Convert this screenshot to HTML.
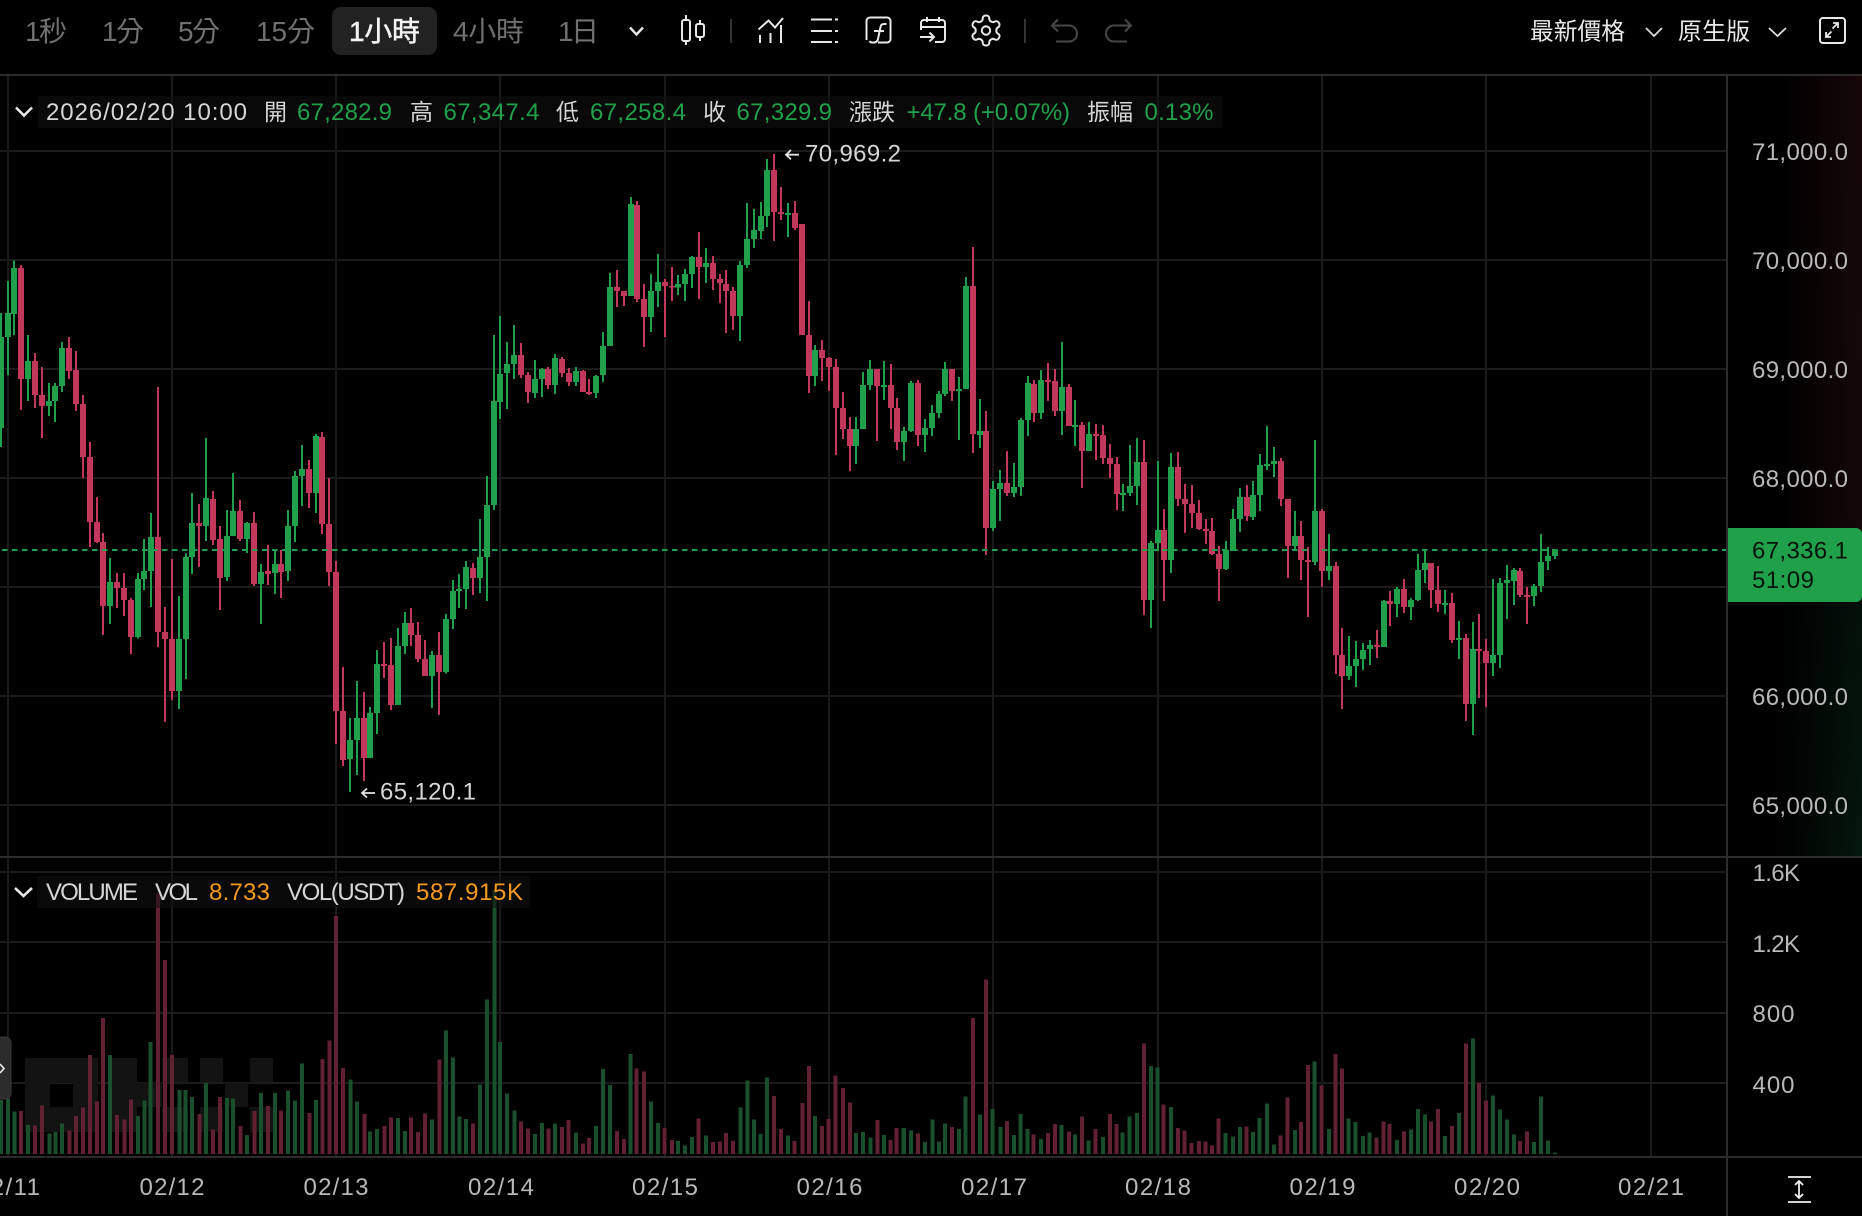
<!DOCTYPE html>
<html lang="zh-Hant">
<head>
<meta charset="utf-8">
<title>Chart</title>
<style>
html,body{margin:0;padding:0;background:#000;width:1862px;height:1216px;overflow:hidden}
svg{display:block}
text{font-family:"Liberation Sans","Noto Sans CJK TC",sans-serif;font-size:24px;fill:#d6d6d6}
.tab{font-size:28px;fill:#707070}
.cj{font-size:23px}
.top{font-size:23.8px;fill:#e8e8e8}
.g{fill:#21a04b}
.o{fill:#f59a1f}
.ax{fill:#b9b9b9}
.gw,.gb,.rw,.rb{fill:none;shape-rendering:crispEdges}
.gw{stroke:#21a04b;stroke-width:6}
.gb{stroke:#21a04b;stroke-width:18}
.rw{stroke:#c2375c;stroke-width:6}
.rb{stroke:#c2375c;stroke-width:18}
.vg,.vr{fill:none;shape-rendering:crispEdges}
.vg{stroke:#1a4f2e}
.vr{stroke:#622033}
.ic{fill:none;stroke:#e8e8e8;stroke-width:2}
.dim{fill:none;stroke:#484848;stroke-width:2}
</style>
</head>
<body>
<svg width="1862" height="1216" viewBox="0 0 1862 1216" xmlns="http://www.w3.org/2000/svg">
<defs>
<linearGradient id="gv" x1="0" y1="0" x2="0" y2="1">
<stop offset="0" stop-color="#160709"/><stop offset=".57" stop-color="#150708"/><stop offset=".68" stop-color="#03100a"/><stop offset="1" stop-color="#04170d"/>
</linearGradient>
<linearGradient id="gh" x1="0" y1="0" x2="1" y2="0">
<stop offset="0" stop-color="#000"/><stop offset=".4" stop-color="#000"/><stop offset="1" stop-color="#000" stop-opacity="0"/>
</linearGradient>
</defs>
<rect width="1862" height="1216" fill="#000"/>

<!-- axis gradient -->
<rect x="1728" y="76" width="134" height="781" fill="url(#gv)"/>
<rect x="1728" y="76" width="134" height="781" fill="url(#gh)"/>

<!-- grid -->
<path fill="none" stroke="#1b1b1b" stroke-width="2" shape-rendering="crispEdges" d="M8 76V1156M172 76V1156M336 76V1156M500 76V1156M665 76V1156M829 76V1156M993 76V1156M1158 76V1156M1322 76V1156M1486 76V1156M1651 76V1156M0 151H1726M0 260H1726M0 369H1726M0 478H1726M0 587H1726M0 696H1726M0 805H1726M0 872H1726M0 942H1726M0 1013H1726M0 1083H1726"/>

<!-- watermark -->
<path fill="#131313" shape-rendering="crispEdges" d="M25 1058H98V1132H25ZM50 1083V1107H73V1083ZM112 1058H137V1132H112ZM137 1083H162V1107H137ZM162 1058H188V1082H162ZM162 1107H188V1132H162ZM200 1058H223V1082H200ZM200 1107H223V1132H200ZM225 1083H248V1107H225ZM250 1058H273V1082H250ZM250 1107H273V1132H250Z"/>

<!-- volume -->
<g transform="translate(0 840) scale(.35714 .33333)" stroke-width="11.2">
<path class="vg" d="M3 780V942M22 775V942M40 815V942M78 855V942M138 880V942M155 876V942M174 850V942M308 645V942M387 828V942M404 781V942M422 606V942M502 750V942M520 750V942M538 771V942M577 729V942M636 774V942M653 775V942M692 885V942M731 759V942M770 759V942M807 751V942M826 781V942M846 670V942M885 780V942M981 718V942M1000 785V942M1036 875V942M1056 867V942M1114 834V942M1134 873V942M1210 838V942M1249 571V942M1269 652V942M1287 829V942M1305 837V942M1344 733V942M1364 478V942M1384 150V942M1400 606V942M1420 761V942M1440 812V942M1498 882V942M1518 849V942"/>
<path class="vr" d="M59 813V942M98 857V942M118 796V942M194 871V942M213 828V942M233 802V942M252 645V942M272 784V942M289 534V942M328 825V942M348 838V942M367 778V942M443 160V942M462 360V942M482 645V942M558 822V942M597 868V942M616 771V942M673 858V942M712 813V942M751 798V942M787 811V942M866 819V942M903 657V942M922 602V942M941 228V942M961 684V942M1020 822V942M1076 858V942M1095 832V942M1151 832V942M1171 876V942M1190 820V942M1230 659V942M1325 851V942M1459 845V942M1479 866V942M1536 865V942"/>
</g>
<g transform="translate(550 960) scale(.54845 .33333)" stroke-width="7.3">
<path class="vg" d="M9 490V582M47 517V582M84 498V582M97 327V582M109 375V582M147 282V582M184 424V582M197 489V582M233 543V582M246 556V582M259 531V582M284 527V582M347 443V582M360 361V582M372 478V582M384 522V582M396 353V582M434 526V582M483 468V582M558 519V582M571 516V582M584 533V582M609 525V582M645 504V582M658 511V582M684 546V582M697 478V582M709 545V582M720 490V582M746 507V582M758 410V582M784 463V582M807 447V582M821 501V582M846 525V582M858 462V582M871 507V582M895 537V582M933 495V582M957 524V582M982 541V582M1008 531V582M1044 518V582M1057 470V582M1070 459V582M1096 318V582M1108 322V582M1132 441V582M1232 519V582M1245 529V582M1258 501V582M1282 516V582M1294 474V582M1307 431V582M1320 553V582M1358 510V582M1394 305V582M1420 507V582M1456 476V582M1469 486V582M1482 528V582M1494 518V582M1544 540V582"/>
<path class="vr" d="M22 501V582M34 480V582M60 550V582M71 534V582M122 513V582M135 537V582M158 325V582M171 334V582M209 504V582M222 540V582M271 476V582M297 546V582M310 545V582M321 519V582M334 543V582M408 408V582M421 507V582M446 543V582M460 429V582M472 318V582M496 498V582M508 477V582M521 346V582M534 384V582M547 427V582M597 480V582M621 540V582M632 504V582M671 521V582M733 501V582M771 174V582M795 58V582M833 483V582M882 524V582M908 519V582M921 492V582M946 514V582M970 470V582M995 507V582M1021 462V582M1033 492V582M1083 250V582M1119 433V582M1145 504V582M1157 511V582M1170 549V582M1183 543V582M1195 545V582M1207 556V582M1219 476V582M1270 500V582M1332 527V582M1345 412V582M1369 486V582M1382 315V582M1407 377V582M1432 282V582M1444 325V582M1507 533V582M1520 485V582M1531 492V582M1557 515V582"/>
</g>
<g transform="translate(1400 840) scale(.33333)" stroke-width="12">
<path class="vg" d="M33 868V942M54 807V942M75 823V942M135 888V942M177 819V942M219 595V942M279 766V942M300 808V942M321 839V942M342 884V942M402 906V942M423 770V942M444 902V942M465 937V942"/>
<path class="vr" d="M93 844V942M114 807V942M156 858V942M198 610V942M237 729V942M258 782V942M360 903V942M381 874V942"/>
</g>

<!-- candles A -->
<g transform="translate(0 250) scale(.33333 .35075)">
<path class="gw" d="M3 180V562M24 88V356M42 30V242M84 242V430M147 379V473M165 379V490M186 263V405M330 878V1066M414 921V1108M432 824V969M453 750V1018M537 986V1309M558 865V1223M576 693V924M618 536V830M681 741V944M699 636V815M741 775V864M783 895V1066M825 852V981M864 741V944M885 630V832M906 556V730M948 525V750M1050 1334V1545M1071 1229V1497M1110 1303V1448M1131 1140V1380M1194 1078V1297"/>
<path class="gb" d="M3 248V507M24 180V248M42 51V182M84 316V368M147 430V445M165 388V430M186 279V388M330 947V1015M414 938V1103M432 915V938M453 818V915M537 1109V1257M558 875V1109M576 778V875M618 707V787M681 815V932M699 744V815M741 778V824M783 918V952M825 895V921M864 787V915M885 644V787M906 624V644M948 530V693M1050 1397V1451M1071 1334V1397M1110 1320V1448M1131 1180V1320M1194 1129V1297"/>
<path class="rw" d="M63 43V456M105 294V450M126 334V536M207 248V368M228 288V459M249 413V650M270 547V847M291 704V835M309 807V1098M351 921V1021M372 921V1043M393 992V1152M474 391V1132M495 1018V1346M516 881V1283M597 724V904M639 687V841M660 787V1026M720 713V830M762 747V958M804 841V955M843 855V992M927 599V736M966 519V810M987 650V958M1008 887V1408M1029 1189V1471M1092 1260V1514M1152 1118V1220M1173 1106V1311"/>
<path class="rb" d="M63 51V368M105 316V413M126 413V445M207 279V345M228 342V439M249 439V590M270 590V775M291 775V832M309 832V1015M351 947V964M372 964V998M393 998V1103M474 818V1089M495 1089V1109M516 1109V1257M597 778V787M639 710V827M660 824V935M720 744V824M762 778V952M804 915V924M843 895V918M927 624V693M966 533V781M987 781V918M1008 918V1314M1029 1314V1454M1092 1334V1448M1152 1180V1186M1173 1183V1297"/>
</g>
<!-- candles B -->
<g transform="translate(400 140) scale(.33333 .35075)">
<path class="gw" d="M15 1346V1465M96 1457V1620M138 1352V1521M159 1254V1394M177 1237V1334M198 1200V1337M240 1080V1291M261 958V1314M282 556V1055M300 502V795M321 576V767M342 527V681M405 627V736M426 650V733M465 610V724M528 647V701M588 670V736M609 547V690M630 379V587M693 163V445M753 382V547M774 325V476M834 385V442M855 368V459M876 331V422M918 308V408M1020 345V573M1041 180V365M1062 197V308M1083 177V282M1101 54V248M1164 180V277"/>
<path class="gb" d="M15 1377V1443M96 1468V1528M138 1366V1517M159 1286V1366M177 1280V1286M198 1217V1280M240 1189V1249M261 1041V1189M282 744V1041M300 667V747M321 639V664M342 613V639M405 681V721M426 653V681M465 621V698M528 659V690M588 673V721M609 587V670M630 419V587M693 182V445M753 430V505M774 405V430M834 411V421M855 382V411M876 334V382M918 351V362M1020 356V502M1041 282V356M1062 257V282M1083 217V259M1101 86V217M1164 208V214"/>
<path class="rw" d="M33 1334V1443M54 1374V1488M75 1425V1528M117 1403V1640M219 1206V1297M363 579V679M384 661V750M444 647V710M486 619V676M507 650V701M549 656V718M567 681V727M651 371V476M672 430V473M711 174V462M732 411V590M795 396V562M816 362V459M897 262V453M939 331V428M960 382V465M978 371V550M999 419V542M1122 40V288M1143 134V228M1185 174V257"/>
<path class="rb" d="M33 1377V1411M54 1411V1480M75 1480V1528M117 1468V1517M219 1220V1249M363 613V670M384 670V718M444 653V698M486 624V664M507 664V690M549 659V718M567 718V724M651 419V430M672 430V445M711 185V453M732 453V505M795 405V416M816 416V421M897 334V362M939 351V396M960 396V408M978 411V430M999 430V502M1122 86V205M1143 205V211M1185 208V251"/>
</g>
<!-- candles C -->
<g transform="translate(790 240) scale(.33333)">
<path class="gw" d="M75 315V438M198 531V672M219 396V567M240 360V450M282 363V480M342 561V663M363 423V576M405 537V636M426 495V588M447 453V534M465 366V468M507 411V600M528 111V447M570 477V624M609 723V873M630 690V843M672 669V771M693 534V768M714 408V588M753 390V537M816 306V585M855 480V618M897 546V633M999 732V813M1020 615V768M1041 594V795M1083 903V1164M1104 663V933M1143 639V999"/>
<path class="gb" d="M75 330V408M198 567V618M219 435V567M240 387V435M282 435V441M342 573V606M363 429V573M405 564V585M426 519V564M447 462V519M465 387V462M507 447V453M528 138V447M570 573V585M609 747V864M630 729V747M672 741V759M693 540V741M714 429V540M753 420V519M816 441V513M855 555V561M897 582V633M999 759V765M1020 738V759M1041 666V738M1083 909V1080M1104 870V909M1143 681V960"/>
<path class="rw" d="M36 -48V285M57 183V459M96 300V423M117 351V453M138 357V645M159 456V597M180 531V693M261 387V603M303 372V567M321 474V630M384 420V618M486 387V483M549 21V639M588 513V945M651 633V768M732 420V546M774 369V483M795 387V528M837 432V558M876 546V744M918 552V660M939 555V672M960 612V714M981 651V810M1062 600V1125M1122 807V1083M1164 636V798M1185 732V879"/>
<path class="rb" d="M36 -48V285M57 285V408M96 330V354M117 354V381M138 381V504M159 504V567M180 567V618M261 387V438M303 435V504M321 504V606M384 429V585M486 387V453M549 138V582M588 573V864M651 729V759M732 432V519M774 420V426M795 423V513M837 441V558M876 555V633M918 582V588M939 585V654M960 654V672M981 672V762M1062 666V1080M1122 870V960M1164 681V777M1185 777V792"/>
</g>
<!-- candles D -->
<g transform="translate(1180 420) scale(.33333)">
<path class="gw" d="M138 363V450M159 267V393M180 204V336M219 183V300M240 102V273M261 18V150M282 81V171M345 273V390M405 60V435M447 342V480M507 648V780M528 663V801M549 669V750M570 660V735M612 540V681M651 501V591M693 534V600M714 402V543M735 387V489M795 510V582M837 603V717M879 606V945M939 477V768M960 474V744M981 435V597M1002 444V555M1062 492V558M1083 342V516M1104 381V450M1125 387V417"/>
<path class="gb" d="M138 390V447M159 297V393M180 231V297M219 225V291M240 135V225M261 132V138M282 123V132M345 348V378M405 273V426M447 438V453M507 738V768M528 717V738M549 690V717M570 675V687M612 543V681M651 507V552M693 540V561M714 450V540M735 429V450M795 549V555M837 654V660M879 687V852M939 705V729M960 489V705M981 480V489M1002 450V483M1062 498V528M1083 426V498M1104 408V423M1125 390V408"/>
<path class="rw" d="M36 195V324M57 240V330M78 297V372M96 294V405M117 378V543M201 195V303M303 114V258M324 237V474M363 303V480M384 381V591M426 267V501M468 426V762M486 624V867M591 630V714M630 513V618M672 477V579M753 429V564M774 438V576M816 519V669M858 642V903M897 582V834M918 657V861M1020 444V531M1041 501V612"/>
<path class="rb" d="M36 252V279M57 279V327M78 327V333M96 333V402M117 402V447M201 231V288M303 123V237M324 237V378M363 348V420M384 420V426M426 273V453M468 438V705M486 705V768M591 675V681M630 543V552M672 507V561M753 429V510M774 510V552M816 549V660M858 654V852M897 687V693M918 693V729M1020 453V525M1041 525V531"/>
</g>

<!-- price line -->
<path d="M2 550H1726" stroke="#21a04b" stroke-width="2" stroke-dasharray="5.5 4.5" fill="none" shape-rendering="crispEdges"/>

<!-- frame lines -->
<path fill="none" stroke="#2c2c2c" stroke-width="2" shape-rendering="crispEdges" d="M0 75H1862M0 857H1862M0 1157H1862M1727 76V1216"/>

<!-- toolbar tabs -->
<rect x="332" y="7" width="105" height="48" rx="9" fill="#222"/>
<text class="tab" x="25" y="41" textLength="42">1秒</text>
<text class="tab" x="102" y="41" textLength="42">1分</text>
<text class="tab" x="178" y="41" textLength="42">5分</text>
<text class="tab" x="256" y="41" textLength="59">15分</text>
<text class="tab" x="349" y="41" textLength="71" style="fill:#f4f4f4;stroke:#f4f4f4;stroke-width:.5">1小時</text>
<text class="tab" x="453" y="41" textLength="71">4小時</text>
<text class="tab" x="558" y="41" textLength="41">1日</text>
<path d="M630 27.5L636.5 34.5L643 27.5" fill="none" stroke="#e8e8e8" stroke-width="2.4"/>

<!-- toolbar icons -->
<g class="ic">
<rect x="682" y="20" width="8" height="21" rx="2"/><path d="M686 15V20M686 41V45"/>
<rect x="696" y="24" width="8" height="13" rx="2"/><path d="M700 20V24M700 37V41"/>
<path d="M758.5 29.5L768.5 20.5L775 27.5L783 18M760 35V43M770.5 33V43M781 25V43"/>
<path d="M811 19.5H832M811 31H832M811 42H832M835 19.5H838M835 31H838M835 42H838"/>
<path d="M866.5 40V21a3.5 3.5 0 0 1 3.500-3.500H887a3.500 3.500 0 0 1 3.500 3.500V39a3.500 3.500 0 0 1-3.500 3.500H878M886.500 24h-2.500q-3 0-3.500 3l-2.500 12q-.6 3-3.500 3.500h-2.500a3 3 0 0 1-2.500-1.500M874 31h10"/>
<path d="M921 30V23a3 3 0 0 1 3-3H942a3 3 0 0 1 3 3V39a3 3 0 0 1-3 3H935M921 27H945M927 17V22M939 17V22M920 37H934M929.500 32.500L934 37L929.500 41.500"/>
</g>
<g transform="translate(968 12.5) scale(1.5)" fill="none" stroke="#e8e8e8" stroke-width="1.35">
<path d="M12.22 2h-.44a2 2 0 0 0-2 2v.18a2 2 0 0 1-1 1.73l-.43.25a2 2 0 0 1-2 0l-.15-.08a2 2 0 0 0-2.73.73l-.22.38a2 2 0 0 0 .73 2.73l.15.1a2 2 0 0 1 1 1.72v.51a2 2 0 0 1-1 1.74l-.15.09a2 2 0 0 0-.73 2.73l.22.38a2 2 0 0 0 2.73.73l.15-.08a2 2 0 0 1 2 0l.43.25a2 2 0 0 1 1 1.73V20a2 2 0 0 0 2 2h.44a2 2 0 0 0 2-2v-.18a2 2 0 0 1 1-1.73l.43-.25a2 2 0 0 1 2 0l.15.08a2 2 0 0 0 2.73-.73l.22-.39a2 2 0 0 0-.73-2.73l-.15-.08a2 2 0 0 1-1-1.74v-.5a2 2 0 0 1 1-1.74l.15-.09a2 2 0 0 0 .73-2.73l-.22-.38a2 2 0 0 0-2.73-.73l-.15.08a2 2 0 0 1-2 0l-.43-.25a2 2 0 0 1-1-1.73V4a2 2 0 0 0-2-2z"/>
<circle cx="12" cy="12" r="2.8"/>
</g>
<path d="M731 19V43M1025 19V43" stroke="#333" stroke-width="2" fill="none"/>
<path class="dim" d="M1058 19.5L1052 25.5L1058 31.5M1052 25.5H1069a8 8 0 0 1 0 16H1056"/>
<path class="dim" d="M1125 19.5L1131 25.5L1125 31.5M1131 25.5H1114a8 8 0 0 0 0 16H1127"/>

<!-- top right -->
<text class="top" x="1530" y="39.5" textLength="95">最新價格</text>
<path d="M1646 28L1654 36L1662 28" fill="none" stroke="#dcdcdc" stroke-width="1.8"/>
<text class="top" x="1678" y="39.5" textLength="72">原生版</text>
<path d="M1769 28L1777.5 36L1786 28" fill="none" stroke="#dcdcdc" stroke-width="1.8"/>
<rect x="1820" y="18" width="25" height="25" rx="3" fill="none" stroke="#e8e8e8" stroke-width="2"/>
<path d="M1832.5 28.5L1838 23M1833 23H1838V28M1826 37L1831.5 31.5M1826 32V37H1831" fill="none" stroke="#e8e8e8" stroke-width="1.8"/>

<!-- OHLC legend -->
<rect x="38" y="96" width="1184" height="32" fill="#101010" fill-opacity=".55"/>
<path d="M16 107.5L24 115.5L32 107.5" fill="none" stroke="#e8e8e8" stroke-width="2.6"/>
<text x="46" y="120" textLength="201">2026/02/20 10:00</text>
<text class="cj" x="264" y="120" textLength="22">開</text>
<text class="g" x="297" y="120" textLength="95">67,282.9</text>
<text class="cj" x="410" y="120" textLength="22">高</text>
<text class="g" x="443.5" y="120" textLength="96">67,347.4</text>
<text class="cj" x="556" y="120" textLength="22">低</text>
<text class="g" x="590" y="120" textLength="96">67,258.4</text>
<text class="cj" x="703" y="120" textLength="22">收</text>
<text class="g" x="736.5" y="120" textLength="95.5">67,329.9</text>
<text class="cj" x="849" y="120" textLength="46">漲跌</text>
<text class="g" x="906.5" y="120" textLength="163.5">+47.8 (+0.07%)</text>
<text class="cj" x="1087" y="120" textLength="46">振幅</text>
<text class="g" x="1144.5" y="120" textLength="69">0.13%</text>

<!-- high / low annotations -->
<path d="M799 154.7H786M791 150L786 154.7L791 159.4" fill="none" stroke="#e4e4e4" stroke-width="1.8"/>
<text x="805" y="161.5" textLength="96">70,969.2</text>
<path d="M375 793H362M367 788.5L362 793L367 797.5" fill="none" stroke="#e4e4e4" stroke-width="1.8"/>
<text x="380" y="799.5" textLength="96">65,120.1</text>

<!-- price axis -->
<text class="ax" x="1752" y="160" textLength="96">71,000.0</text>
<text class="ax" x="1752" y="269" textLength="96">70,000.0</text>
<text class="ax" x="1752" y="378" textLength="96">69,000.0</text>
<text class="ax" x="1752" y="487" textLength="96">68,000.0</text>
<text class="ax" x="1752" y="705" textLength="96">66,000.0</text>
<text class="ax" x="1752" y="814" textLength="96">65,000.0</text>

<!-- price tag -->
<path d="M1728 528H1856a6 6 0 0 1 6 6V596a6 6 0 0 1-6 6H1728Z" fill="#21a04b"/>
<text x="1752" y="558.5" textLength="96" style="fill:#06140b">67,336.1</text>
<text x="1752" y="588" textLength="62" style="fill:#06140b">51:09</text>

<!-- volume legend -->
<rect x="37" y="876" width="493" height="32" fill="#101010" fill-opacity=".55"/>
<path d="M15 888L23.5 896L32 888" fill="none" stroke="#e8e8e8" stroke-width="2.6"/>
<text x="46" y="900" textLength="92">VOLUME</text>
<text x="155" y="900" textLength="43">VOL</text>
<text class="o" x="209" y="900" textLength="61">8.733</text>
<text x="287" y="900" textLength="118">VOL(USDT)</text>
<text class="o" x="416" y="900" textLength="107">587.915K</text>

<!-- volume axis -->
<text class="ax" x="1752.5" y="881" textLength="47.5">1.6K</text>
<text class="ax" x="1752.5" y="952" textLength="47.5">1.2K</text>
<text class="ax" x="1752.5" y="1022" textLength="42">800</text>
<text class="ax" x="1752.5" y="1093" textLength="42">400</text>

<!-- time axis -->
<text class="ax" x="-24" y="1195" textLength="64">02/11</text>
<text class="ax" x="139.5" y="1195" textLength="65">02/12</text>
<text class="ax" x="303.5" y="1195" textLength="65">02/13</text>
<text class="ax" x="468" y="1195" textLength="66">02/14</text>
<text class="ax" x="632" y="1195" textLength="66">02/15</text>
<text class="ax" x="796.5" y="1195" textLength="66">02/16</text>
<text class="ax" x="961" y="1195" textLength="66">02/17</text>
<text class="ax" x="1125" y="1195" textLength="66">02/18</text>
<text class="ax" x="1289.5" y="1195" textLength="66">02/19</text>
<text class="ax" x="1454" y="1195" textLength="66">02/20</text>
<text class="ax" x="1618" y="1195" textLength="66">02/21</text>

<!-- left handle -->
<rect x="-8" y="1037" width="19" height="62" rx="6" fill="#2c2c2c" stroke="#3a3a3a" stroke-width="1"/>
<path d="M0 1064L4 1068.5L0 1073" fill="none" stroke="#f0f0f0" stroke-width="1.6"/>

<!-- auto-scale icon -->
<path d="M1788 1177H1811M1788 1202H1811M1799 1181V1198M1795 1185L1799 1181L1803 1185M1795 1194L1799 1198L1803 1194" fill="none" stroke="#f0f0f0" stroke-width="1.8"/>
</svg>
</body>
</html>
